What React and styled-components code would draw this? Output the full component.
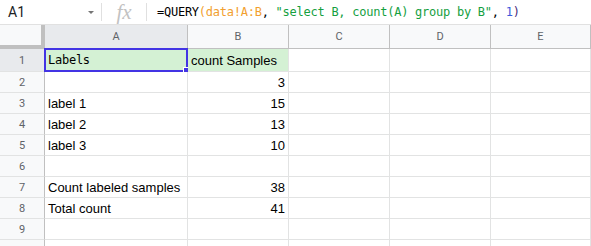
import React from 'react';
import styled, { createGlobalStyle, css } from 'styled-components';

const GlobalStyle = createGlobalStyle`
    html, body {
        margin: 0;
        padding: 0;
        background: #ffffff;
        overflow: hidden;
    }
`;

const Sheet = styled.div`
    width: 591px;
    height: 246px;
    overflow: hidden;
    background: #ffffff;
    font-family: "Liberation Sans", Arial, sans-serif;
`;

const FormulaBar = styled.div`
    display: flex;
    align-items: center;
    height: 24px;
    border-bottom: 1px solid #e1e1e1;
`;

const NameBox = styled.div`
    display: flex;
    align-items: center;
    justify-content: space-between;
    width: 101px;
    height: 100%;
    padding: 0 7px 0 8px;
    box-sizing: border-box;
    font-family: Roboto, "Liberation Sans", sans-serif;
    font-size: 14px;
    color: #202124;
`;

const Caret = styled.span`
    width: 0;
    height: 0;
    border-left: 3px solid transparent;
    border-right: 3px solid transparent;
    border-top: 3px solid #757575;
    margin-top: 1px;
`;

const Divider = styled.span`
    width: 1px;
    height: 18px;
    background: #e0e0e0;
`;

const FxLabel = styled.span`
    width: 44px;
    text-align: center;
    font-family: "Liberation Serif", "Times New Roman", serif;
    font-style: italic;
    font-size: 21px;
    color: #c2c2c2;
    line-height: 24px;
`;

const FormulaText = styled.div`
    padding-left: 10px;
    font-family: "DejaVu Sans Mono", "Liberation Mono", monospace;
    font-size: 12px;
    letter-spacing: -0.25px;
    color: #000000;
    white-space: pre;
`;

const Token = styled.span`
    color: ${props => props.$color};
`;

const Grid = styled.div`
    display: grid;
    grid-template-columns: 45px 143px 101px 101px 101px 1fr;
    grid-template-rows: 24px 23px repeat(9, 21px);
`;

const Corner = styled.div`
    background: #f8f9fa;
    border-right: 4px solid #c0c0c0;
    border-bottom: 4px solid #c0c0c0;
`;

const ColHeader = styled.div`
    display: flex;
    align-items: center;
    justify-content: center;
    background: ${props => (props.$selected ? '#e8eaed' : '#f8f9fa')};
    border-right: 1px solid #c0c0c0;
    border-bottom: 1px solid #c0c0c0;
    font-family: Roboto, "Liberation Sans", sans-serif;
    font-size: 11px;
    color: #5f6368;
`;

const RowHeader = styled.div`
    display: flex;
    align-items: center;
    justify-content: center;
    background: ${props => (props.$selected ? '#e8eaed' : '#f8f9fa')};
    border-right: 1px solid #c0c0c0;
    border-bottom: 1px solid #e2e3e3;
    font-family: Roboto, "Liberation Sans", sans-serif;
    font-size: 11px;
    color: #5f6368;
`;

const Cell = styled.div`
    position: relative;
    display: flex;
    align-items: center;
    justify-content: ${props => (props.$align === 'right' ? 'flex-end' : 'flex-start')};
    padding: 0 3px;
    background: ${props => props.$fill || '#ffffff'};
    border-right: 1px solid #e2e3e3;
    border-bottom: 1px solid #e2e3e3;
    font-size: 13px;
    color: #000000;
    white-space: nowrap;
    ${props => props.$mono && css`
        font-family: "DejaVu Sans Mono", "Liberation Mono", monospace;
        font-size: 12px;
        letter-spacing: -0.25px;
    `}
`;

const Selection = styled.div`
    position: absolute;
    left: -1px;
    top: -1px;
    right: -1px;
    bottom: -1px;
    border: 2px solid #4334e4;
    pointer-events: none;
`;

const FillHandle = styled.div`
    position: absolute;
    right: -5px;
    bottom: -5px;
    width: 6px;
    height: 6px;
    background: #4334e4;
    border: 1px solid #ffffff;
`;

const columns = ['A', 'B', 'C', 'D', 'E'];

const rows = [
    ['Labels', 'count Samples'],
    ['', '3'],
    ['label 1', '15'],
    ['label 2', '13'],
    ['label 3', '10'],
    ['', ''],
    ['Count labeled samples', '38'],
    ['Total count', '41'],
    ['', ''],
    ['', ''],
];

const green = '#d4f1d4';

export default function App() {
    return (
        <>
            <GlobalStyle />
            <Sheet>
                <FormulaBar>
                    <NameBox>
                        A1
                        <Caret />
                    </NameBox>
                    <Divider />
                    <FxLabel>fx</FxLabel>
                    <Divider />
                    <FormulaText>
                        =QUERY<Token $color="#f29f2f">(</Token>
                        <Token $color="#f29f2f">data!A:B</Token>, <Token $color="#15a03f">"select B, count(A) group by B"</Token>, <Token $color="#3b5bdb">1</Token>
                        <Token $color="#4a2a7a">)</Token>
                    </FormulaText>
                </FormulaBar>
                <Grid>
                    <Corner />
                    {columns.map(c => (
                        <ColHeader key={c} $selected={c === 'A'}>{c}</ColHeader>
                    ))}
                    {rows.map((row, i) => (
                        <React.Fragment key={i}>
                            <RowHeader $selected={i === 0}>{i + 1}</RowHeader>
                            <Cell $fill={i === 0 ? green : undefined} $mono={i === 0}>
                                {row[0]}
                                {i === 0 && (
                                    <Selection>
                                        <FillHandle />
                                    </Selection>
                                )}
                            </Cell>
                            <Cell $fill={i === 0 ? green : undefined} $align={i === 0 ? 'left' : 'right'}>
                                {row[1]}
                            </Cell>
                            <Cell />
                            <Cell />
                            <Cell />
                        </React.Fragment>
                    ))}
                </Grid>
            </Sheet>
        </>
    );
}
